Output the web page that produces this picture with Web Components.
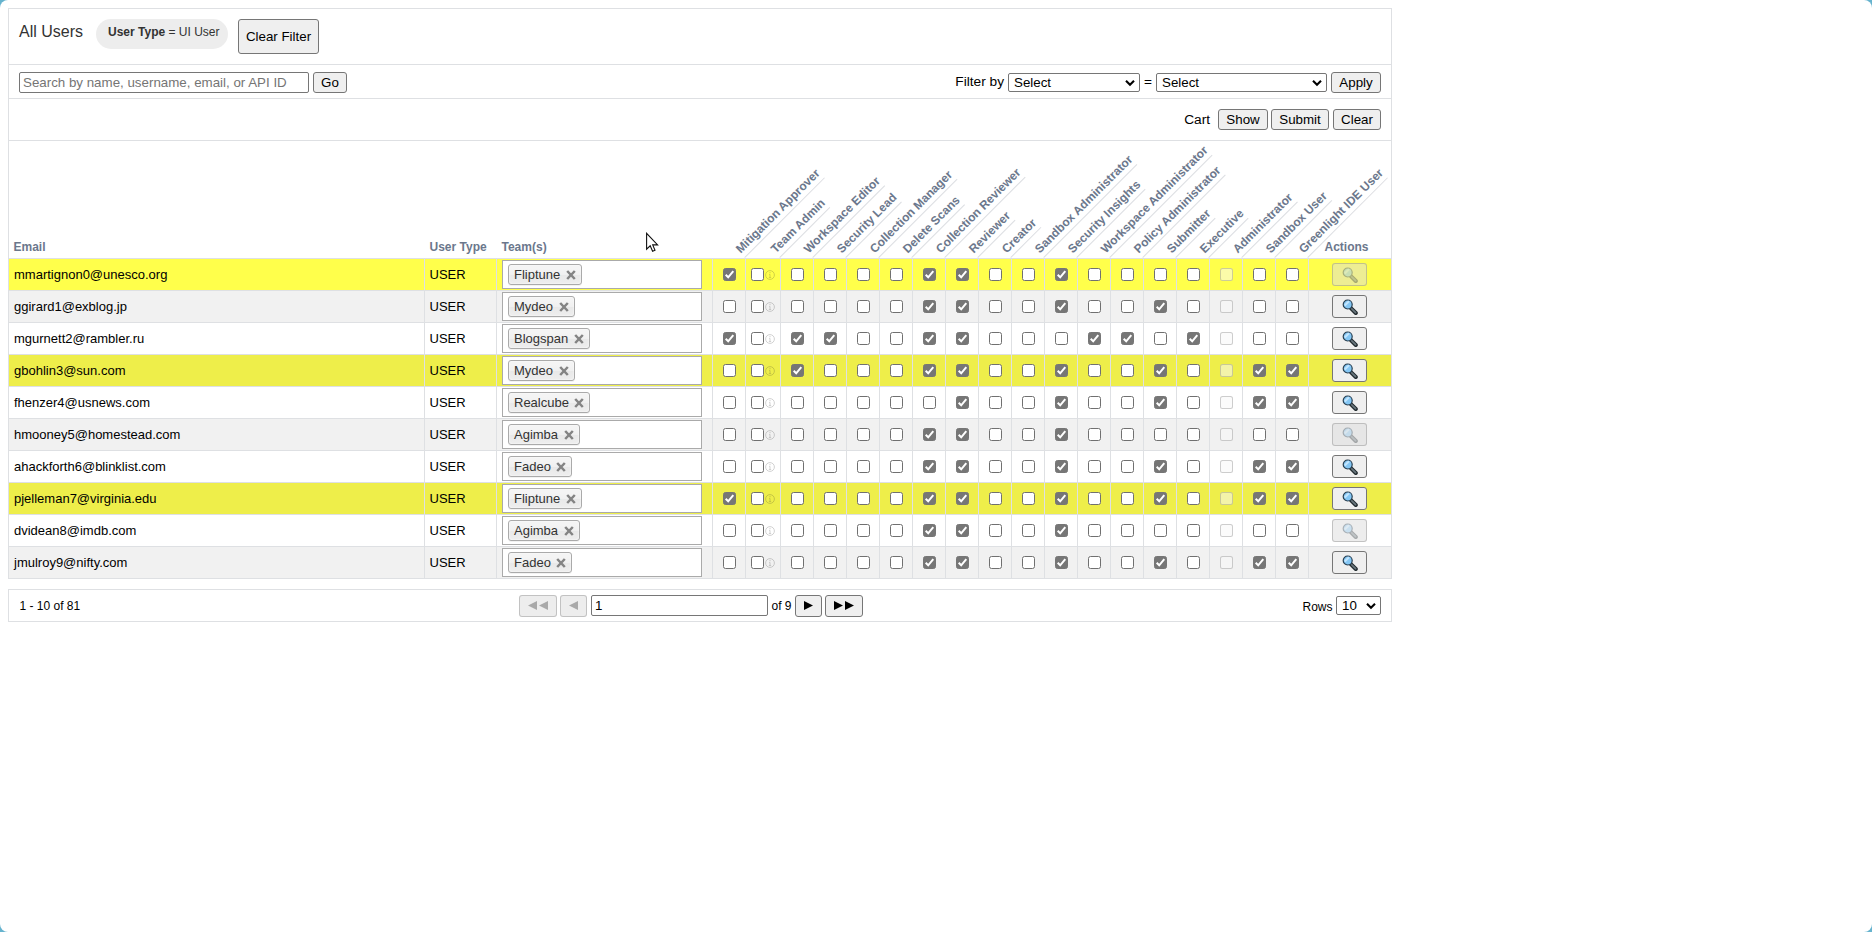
<!DOCTYPE html>
<html lang="en">
<head>
<meta charset="utf-8">
<title>All Users</title>
<style>
html,body{margin:0;height:100%;background:#66b3ce;overflow:hidden}
</style>
</head>
<body>
<user-admin></user-admin>
<script>
const BTN=`button{box-sizing:border-box;margin:0;padding:0;height:21px;border:1px solid #767676;border-radius:3px;background:#efefef;color:#000;font:13.333px/17px "Liberation Sans",Arial,sans-serif;white-space:nowrap;width:100%;display:block}
button:disabled{border-color:rgba(118,118,118,.36);background:rgba(220,220,220,.5);color:#a8a8a8}`;
function define(name,render,after){
  customElements.define(name,class extends HTMLElement{
    connectedCallback(){
      if(this.shadowRoot)return;
      this.attachShadow({mode:'open'});
      const t=document.createElement('template');
      t.innerHTML=render(this);
      this.shadowRoot.append(t.content.cloneNode(true));
      if(after)after(this);
    }
  });
}

define('ui-button',e=>`<style>:host{display:block;width:${e.getAttribute('w')}px;flex:none}${BTN}button{height:${e.getAttribute('h')||21}px}
svg{display:block;margin:auto}</style><button ${e.hasAttribute('disabled')?'disabled':''}><slot></slot></button>`);

define('ui-select',e=>`<style>:host{display:flex;box-sizing:border-box;width:${e.getAttribute('w')}px;height:19px;border:1px solid #767676;border-radius:2px;background:#fff;align-items:center;justify-content:space-between;padding:0 4px 0 5px;font:13.333px/17px "Liberation Sans",Arial,sans-serif;color:#000;flex:none}
svg{display:block}</style><span><slot></slot></span><svg width="10" height="8" viewBox="0 0 10 8"><path d="M1 1.8 5 5.8 9 1.8" fill="none" stroke="#000" stroke-width="2.1"/></svg>`);

define('ui-input',e=>`<style>:host{display:block;width:${e.getAttribute('w')}px;flex:none}
input{display:block;box-sizing:border-box;width:100%;height:21px;margin:0;padding:1px 3px;border:1px solid #767676;border-radius:2px;background:#fff;font:13.333px "Liberation Sans",Arial,sans-serif;color:#000}
input::placeholder{color:#757575;opacity:1}</style><input type="text" ${e.hasAttribute('placeholder')?`placeholder="${e.getAttribute('placeholder')}"`:''} value="${e.getAttribute('value')||''}">`);

define('ui-check',e=>`<style>:host{display:block;flex:none;width:13px;height:13px}
i{display:block;box-sizing:border-box;width:13px;height:13px;border:1px solid #707070;border-radius:2.5px;background:#fff}
i.on{background:#767676;border-color:#767676}
i.off{border-color:rgba(118,118,118,.34);background:rgba(248,248,248,.55)}
svg{display:block;margin:-1px}</style><i class="${e.hasAttribute('checked')?'on':e.hasAttribute('disabled')?'off':''}">${e.hasAttribute('checked')?'<svg width="13" height="13" viewBox="0 0 13 13"><path d="M2.7 6.8 5.2 9.3 10.3 3.1" fill="none" stroke="#fff" stroke-width="2"/></svg>':''}</i>`);

define('info-icon',()=>`<style>:host{display:block;flex:none;width:10px;height:10px;opacity:.22}svg{display:block}</style>
<svg width="10" height="10" viewBox="0 0 10 10"><circle cx="5" cy="5" r="4.4" fill="none" stroke="#333" stroke-width="1"/><path d="M5 2v1.2M4.1 4.4H5V7.4M3.9 7.5h2.2" stroke="#333" fill="none"/></svg>`);

define('magnifier-icon',()=>`<style>:host{display:block;width:16px;height:16px;margin:auto}:host([faded]){opacity:.34}svg{display:block}</style>
<svg width="16" height="16" viewBox="0 0 16 16"><path d="M8.6 8.8 13.8 14" stroke="#222b2f" stroke-width="4" stroke-linecap="round"/><path d="M9.8 9.8 13.6 13.7" stroke="#69777e" stroke-width="1.7" stroke-linecap="round"/><circle cx="5.7" cy="5.5" r="4.5" fill="#84c7f5" stroke="#293f50" stroke-width="1.2"/><path d="M2.7 6.5 7 2.2" stroke="#c2e5fd" stroke-width="2"/></svg>`);

define('team-field',()=>`<style>:host{display:block;box-sizing:border-box;width:200px;height:29px;border:1px solid #aaa;background:#fff;padding:3px 5px}
span{display:inline-flex;box-sizing:border-box;height:21px;border:1px solid #aaa;border-radius:3px;background:linear-gradient(#f4f4f4 20%,#f0f0f0 50%,#e8e8e8 52%,#eee);box-shadow:0 0 2px #fff inset,0 1px 0 rgba(0,0,0,.05);align-items:center;padding:0 5px;font:13px/19px "Liberation Sans",Arial,sans-serif;color:#333;gap:5.5px}
svg{display:block}</style><span><slot></slot><svg width="10" height="10" viewBox="0 0 10 10"><path d="M1.2 1 8.8 9M8.8 1 1.2 9" stroke="#848484" stroke-width="2.5"/></svg></span>`);

define('slant-label',()=>`<style>:host{display:block;position:relative;height:117px;min-width:0}
span{position:absolute;left:100%;bottom:0;transform-origin:0 100%;transform:rotate(-45deg);white-space:nowrap;border-bottom:1px solid #dcdee2;padding:0 0 2px;font:bold 12px/14px "Liberation Sans",Arial,sans-serif;color:#6b778c}</style><span><slot></slot></span>`);

const COLS='grid-template-columns:415px 71px 215px 32px 34px repeat(16,32px) 82px;column-gap:1px;';
define('head-row',e=>`<style>:host{display:grid;${COLS}height:117px;align-items:end;font:bold 12px/14px "Liberation Sans",Arial,sans-serif;color:#6b778c;background:#fff}
b{padding:0 0 4px 4.5px}b:first-child{padding-left:5px}b:last-child{padding-left:15.5px}</style>
<b>Email</b><b>User Type</b><b>Team(s)</b>${ROLES.map(r=>`<slant-label>${r}</slant-label>`).join('')}<b>Actions</b>`);

define('user-row',e=>{
  const on=e.getAttribute('on').split(',').map(Number),dis=e.hasAttribute('locked');
  let cells='';
  for(let i=1;i<=18;i++)cells+=`<div class="c${i==2?' two':''}"><ui-check ${on.includes(i)?'checked':''} ${i==16?'disabled':''}></ui-check>${i==2?'<info-icon></info-icon>':''}</div>`;
  return `<style>:host{display:grid;${COLS}height:31px;background:#dee0e3;font:13px/15px "Liberation Sans",Arial,sans-serif;color:#000;--bg:${e.getAttribute('bg')}}
div{background:var(--bg);display:flex;align-items:center;min-width:0}
.t{padding:0 0 0 5px}.u{padding-left:4.5px}.c{padding-left:10px}.two{padding-left:5px;gap:1px}.a{padding-left:23px}</style>
<div class="t">${e.getAttribute('email')}</div><div class="u">USER</div><div class="t"><team-field>${e.getAttribute('team')}</team-field></div>${cells}
<div class="a"><ui-button w="35" h="23" ${dis?'disabled':''}><magnifier-icon ${dis?'faded':''}></magnifier-icon></ui-button></div>`;});

define('top-bar',()=>`<style>:host{display:flex;box-sizing:border-box;height:56px;border-bottom:1px solid #dee0e3;padding:10px 10px 0;align-items:flex-start;font:16px/18px "Liberation Sans",Arial,sans-serif;color:#333}
h1{font:inherit;margin:4px 0 0;width:77px}
p{margin:0;box-sizing:border-box;width:132px;height:30px;border-radius:15px;background:#ededed;font-size:12px;line-height:14px;padding:6px 0 0 12px;white-space:nowrap;margin-right:10px}</style>
<h1>All Users</h1><p><b>User Type</b> = UI User</p><ui-button w="81" h="35">Clear Filter</ui-button>`);

define('search-bar',()=>`<style>:host{display:flex;box-sizing:border-box;height:34px;border-bottom:1px solid #dee0e3;padding:7px 10px 0;align-items:flex-start;font:13.7px/16px "Liberation Sans",Arial,sans-serif;color:#000}
.g{flex:1}span{margin-top:2px}ui-select{margin-top:1px}.f{margin-right:4px}.e{width:16px;text-align:center}ui-input{margin-right:4px}.s2{margin-right:4px}</style>
<ui-input w="290" placeholder="Search by name, username, email, or API ID"></ui-input><ui-button w="34">Go</ui-button><span class="g"></span>
<span class="f">Filter by</span><ui-select w="132">Select</ui-select><span class="e">=</span><ui-select class="s2" w="171">Select</ui-select><ui-button w="50">Apply</ui-button>`);

define('cart-bar',()=>`<style>:host{display:flex;box-sizing:border-box;height:42px;border-bottom:1px solid #dee0e3;padding:10px 10px 0;align-items:flex-start;justify-content:flex-end;font:13.7px/16px "Liberation Sans",Arial,sans-serif;color:#000}
span{margin:3px 8px 0 0}.a{margin-right:3px}.b{margin-right:4px}</style>
<span>Cart</span><ui-button class="a" w="50">Show</ui-button><ui-button class="b" w="58">Submit</ui-button><ui-button w="48">Clear</ui-button>`);

define('pager-bar',()=>`<style>:host{display:flex;box-sizing:border-box;width:1384px;height:33px;border:1px solid #dee0e3;margin-top:10px;padding:0 10px;align-items:center;font:12px/14px "Liberation Sans",Arial,sans-serif;color:#000;white-space:nowrap}
.n{width:499.5px;padding-left:.5px}.o{width:27px;padding-left:3.5px;box-sizing:border-box}.g{flex:1}ui-button{margin-right:3px}.p{margin-right:4px}.r{margin-right:3.5px;position:relative;top:1px}</style>
<span class="n">1 - 10 of 81</span><ui-button w="38" h="22" disabled><svg width="20" height="9"><path d="M9 0v9L0 4.5zM20 0v9l-9-4.5z" fill="#a9a9a9"/></svg></ui-button>
<ui-button class="p" w="27" h="22" disabled><svg width="9" height="9"><path d="M9 0v9L0 4.5z" fill="#a9a9a9"/></svg></ui-button>
<ui-input w="177" value="1"></ui-input><span class="o">of 9</span>
<ui-button w="27" h="22"><svg width="9" height="9"><path d="M0 0v9l9-4.5z"/></svg></ui-button>
<ui-button w="38" h="22"><svg width="20" height="9"><path d="M0 0v9l9-4.5zM11 0v9l9-4.5z"/></svg></ui-button>
<span class="g"></span><span class="r">Rows</span><ui-select w="45">10</ui-select>`);

define('mouse-pointer',()=>`<style>:host{display:block;position:absolute;left:646px;top:232px;width:13px;height:21px}svg{display:block}</style>
<svg width="13" height="21" viewBox="0 0 13 21"><path d="M.6 1.3V17.2L4.2 13.8 6.6 19.2 9 18.2 6.7 12.9H11.6Z" fill="#fff" stroke="#111" stroke-width="1.1"/></svg>`);

const ROLES=['Mitigation Approver','Team Admin','Workspace Editor','Security Lead','Collection Manager','Delete Scans','Collection Reviewer','Reviewer','Creator','Sandbox Administrator','Security Insights','Workspace Administrator','Policy Administrator','Submitter','Executive','Administrator','Sandbox User','Greenlight IDE User'];
const USERS=[
['mmartignon0@unesco.org','Fliptune','1,7,8,11','#ffff4b',1],
['ggirard1@exblog.jp','Mydeo','7,8,11,14','#f1f1f1',0],
['mgurnett2@rambler.ru','Blogspan','1,3,4,7,8,12,13,15','#fff',0],
['gbohlin3@sun.com','Mydeo','3,7,8,11,14,17,18','#eeee4a',0],
['fhenzer4@usnews.com','Realcube','8,11,14,17,18','#fff',0],
['hmooney5@homestead.com','Agimba','7,8,11','#f1f1f1',1],
['ahackforth6@blinklist.com','Fadeo','7,8,11,14,17,18','#fff',0],
['pjelleman7@virginia.edu','Fliptune','1,7,8,11,14,17,18','#eeee4a',0],
['dvidean8@imdb.com','Agimba','7,8,11','#fff',1],
['jmulroy9@nifty.com','Fadeo','7,8,11,14,17,18','#f1f1f1',0]];

define('user-table',()=>`<style>:host{display:flex;flex-direction:column;background:#fff}
.rows{display:flex;flex-direction:column;gap:1px;background:#dee0e3;padding-top:1px}</style>
<head-row></head-row><div class="rows">${USERS.map(u=>`<user-row email="${u[0]}" team="${u[1]}" on="${u[2]}" bg="${u[3]}" ${u[4]?'locked':''}></user-row>`).join('')}</div>`);

define('user-admin',()=>`<style>:host{display:block;box-sizing:border-box;position:relative;width:1872px;height:932px;padding:8px;background:#fff;border-radius:8px;overflow:hidden}
section{box-sizing:border-box;width:1384px;border:1px solid #dee0e3}</style>
<section><top-bar></top-bar><search-bar></search-bar><cart-bar></cart-bar><user-table></user-table></section>
<pager-bar></pager-bar><mouse-pointer></mouse-pointer>`);
</script>
</body>
</html>
